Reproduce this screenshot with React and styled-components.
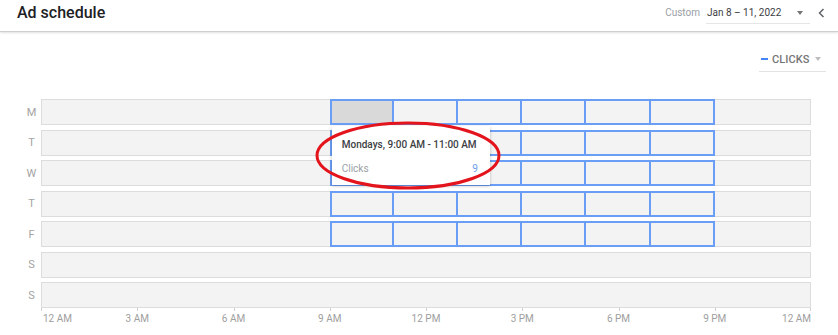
import React from 'react'
import styled, { createGlobalStyle } from 'styled-components'

const GlobalStyle = createGlobalStyle`
  html, body {
    margin: 0;
    padding: 0;
    background: #fff;
    font-family: Roboto, 'Liberation Sans', Arial, sans-serif;
  }
`

const Page = styled.div`
  width: 838px;
  height: 335px;
  overflow: hidden;
  background: #fff;
`

const Header = styled.header`
  display: flex;
  align-items: flex-start;
  height: 32px;
  padding: 3px 13px 0 17px;
  box-sizing: border-box;
  border-bottom: 1px solid #cfcfcf;
  box-shadow: 0 1px 2px rgba(0, 0, 0, 0.12);
`

const Title = styled.h1`
  margin: 0;
  font-size: 16px;
  line-height: 20px;
  font-weight: 500;
  color: #202124;
`

const HeaderRight = styled.div`
  margin-left: auto;
  display: flex;
  align-items: flex-start;
`

const RangeLabel = styled.span`
  font-size: 10px;
  line-height: 20px;
  color: #9aa0a6;
  margin-right: 6px;
`

const DateSelect = styled.div`
  display: flex;
  align-items: center;
  width: 104px;
  height: 21px;
  box-sizing: border-box;
  padding: 0 7px 1px 1px;
  border-bottom: 1px solid #e6e6e6;
  font-size: 10px;
  line-height: 20px;
  color: #3c4043;
`

const Caret = styled.span`
  margin-left: auto;
  width: 0;
  height: 0;
  border-left: 3.5px solid transparent;
  border-right: 3.5px solid transparent;
  border-top: 4px solid ${(p) => p.color || '#757575'};
`

const PrevButton = styled.span`
  display: flex;
  margin: 5px 0 0 8px;
`

const Body = styled.div`
  display: flex;
  flex-direction: column;
`

const Legend = styled.div`
  align-self: flex-end;
  display: flex;
  align-items: center;
  margin: 16px 12px 0 0;
  width: 67px;
  height: 24px;
  box-sizing: border-box;
  padding: 0 5px 1px 2px;
  border-bottom: 1px solid #e3e3e3;
`

const LegendSwatch = styled.span`
  width: 7px;
  height: 2px;
  background: #4285f4;
  margin-right: 4px;
`

const LegendText = styled.span`
  font-size: 11px;
  font-weight: 500;
  color: #757575;
  letter-spacing: 0.1px;
`

const Chart = styled.div`
  margin-top: 27px;
`

const Rows = styled.div`
  display: grid;
  grid-template-columns: 41px 770px;
  row-gap: 4.5px;
`

const DayLabel = styled.span`
  display: flex;
  align-items: center;
  justify-content: center;
  padding-left: 22px;
  font-size: 11px;
  color: #a3a3a3;
`

const Track = styled.div`
  display: grid;
  grid-template-columns: repeat(24, 1fr);
  height: 26px;
  background: #f3f3f3;
  box-shadow: inset 0 0 0 1px #dcdcdc;
`

const Slot = styled.div`
  position: relative;
  grid-column: ${(p) => p.start} / span 2;
  margin-left: ${(p) => (p.first ? 0 : -2)}px;
  border: 2px solid #6a9ef6;
  background: ${(p) => (p.active ? '#d9d9d9' : 'transparent')};
`

const Tooltip = styled.div`
  position: absolute;
  z-index: 10;
  top: calc(100% + 3px);
  left: 0;
  width: 158px;
  height: 59px;
  box-sizing: border-box;
  padding: 12px 12px 0 10px;
  background: #fff;
  box-shadow: 0 1px 3px rgba(0, 0, 0, 0.25);
  display: flex;
  flex-direction: column;
  gap: 11px;
`

const TooltipTitle = styled.div`
  font-size: 10px;
  font-weight: 500;
  color: #3c4043;
  white-space: nowrap;
  line-height: 13px;
`

const TooltipRow = styled.div`
  display: flex;
  justify-content: space-between;
  font-size: 10px;
  line-height: 13px;
`

const MetricName = styled.span`
  color: #9aa0a6;
`

const MetricValue = styled.span`
  color: #6d9eeb;
`

const Highlight = styled.svg`
  position: absolute;
  z-index: 11;
  left: -17px;
  top: 20px;
  overflow: visible;
  pointer-events: none;
`

const Axis = styled.div`
  display: grid;
  grid-template-columns: repeat(8, 1fr);
  width: 770px;
  margin-left: 41px;
`

const AxisCell = styled.div`
  position: relative;
  display: flex;
  justify-content: space-between;
  padding-top: 5px;
  font-size: 10px;
  line-height: 12px;
  color: #9e9e9e;

  &::before {
    content: '';
    position: absolute;
    left: 0;
    top: 0;
    width: 1px;
    height: 3px;
    background: #cfcfcf;
  }
`

const AxisLabel = styled.span`
  white-space: nowrap;
  transform: translateX(${(p) => (p.edge === 'start' ? '2px' : p.edge === 'end' ? '0' : '-50%')});
`

const EndTick = styled.span`
  position: absolute;
  right: 0;
  top: 0;
  width: 1px;
  height: 3px;
  background: #cfcfcf;
`

const days = [
  { label: 'M', on: true },
  { label: 'T', on: true },
  { label: 'W', on: true },
  { label: 'T', on: true },
  { label: 'F', on: true },
  { label: 'S', on: false },
  { label: 'S', on: false },
]

const slotStarts = [10, 12, 14, 16, 18, 20]

const ticks = ['12 AM', '3 AM', '6 AM', '9 AM', '12 PM', '3 PM', '6 PM', '9 PM']

function Chevron() {
  return (
    <svg width="7" height="10" viewBox="0 0 7 10">
      <polyline points="5.5,1 1.5,5 5.5,9" fill="none" stroke="#5f6368" strokeWidth="1.5" />
    </svg>
  )
}

export default function App() {
  return (
    <Page>
      <GlobalStyle />
      <Header>
        <Title>Ad schedule</Title>
        <HeaderRight>
          <RangeLabel>Custom</RangeLabel>
          <DateSelect>
            Jan 8 – 11, 2022
            <Caret />
          </DateSelect>
          <PrevButton>
            <Chevron />
          </PrevButton>
        </HeaderRight>
      </Header>
      <Body>
        <Legend>
          <LegendSwatch />
          <LegendText>CLICKS</LegendText>
          <Caret color="#bdbdbd" />
        </Legend>
        <Chart>
          <Rows>
            {days.map((d, i) => (
              <React.Fragment key={i}>
                <DayLabel>{d.label}</DayLabel>
                <Track>
                  {d.on &&
                    slotStarts.map((s, j) => (
                      <Slot key={s} start={s} first={j === 0} active={i === 0 && j === 0}>
                        {i === 0 && j === 0 && (
                          <>
                            <Tooltip>
                              <TooltipTitle>Mondays, 9:00 AM - 11:00 AM</TooltipTitle>
                              <TooltipRow>
                                <MetricName>Clicks</MetricName>
                                <MetricValue>9</MetricValue>
                              </TooltipRow>
                            </Tooltip>
                            <Highlight width="186" height="69" viewBox="0 0 186 69">
                              <ellipse cx="93" cy="34.5" rx="91" ry="32.5" fill="none" stroke="#e3141c" strokeWidth="3" />
                            </Highlight>
                          </>
                        )}
                      </Slot>
                    ))}
                </Track>
              </React.Fragment>
            ))}
          </Rows>
          <Axis>
            {ticks.map((t, i) => (
              <AxisCell key={t}>
                <AxisLabel edge={i === 0 ? 'start' : undefined}>{t}</AxisLabel>
                {i === ticks.length - 1 && (
                  <>
                    <AxisLabel edge="end">12 AM</AxisLabel>
                    <EndTick />
                  </>
                )}
              </AxisCell>
            ))}
          </Axis>
        </Chart>
      </Body>
    </Page>
  )
}
